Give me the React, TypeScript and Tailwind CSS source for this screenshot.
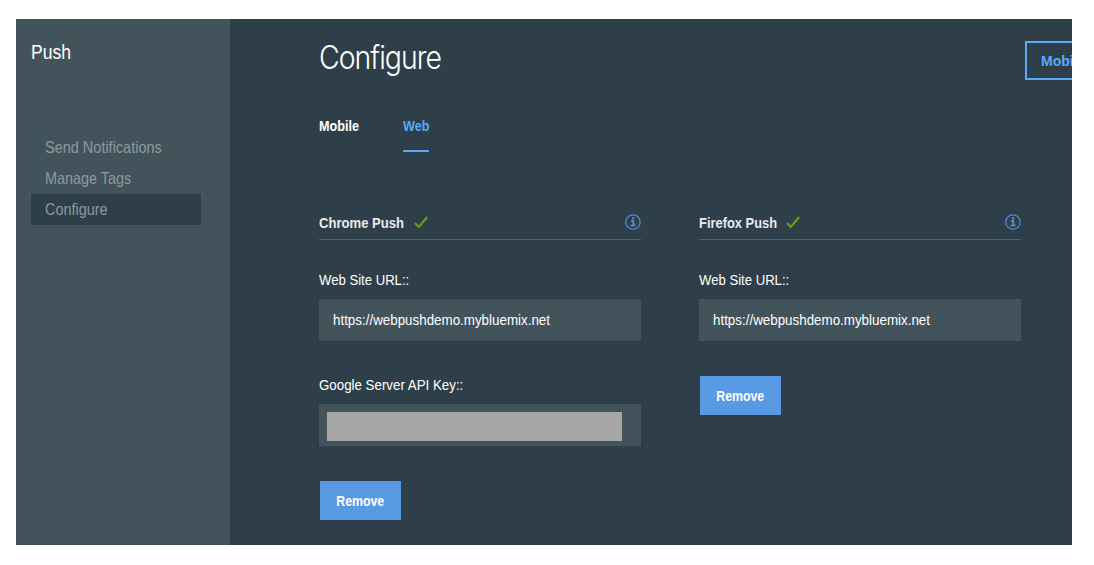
import type { ReactNode } from "react";

function Check() {
  return (
    <svg className="-ml-px -mt-px h-[13px] w-[14px]" viewBox="0 0 14 13" fill="none" stroke="#5aa700" strokeWidth="2.1">
      <path d="M0.9 7 L4.8 11 L13.2 1" />
    </svg>
  );
}

function Info() {
  return (
    <svg className="h-4 w-4" viewBox="0 0 16 16" fill="none" stroke="#4f8fdd">
      <circle cx="8" cy="8" r="7.2" strokeWidth="1.2" />
      <path d="M6 6.8H8.3V11.4M5.4 11.5H10.8" strokeWidth="1.7" />
      <path d="M7 4.3H9.2" strokeWidth="2" />
    </svg>
  );
}

function PushHeader({ children }: { children: ReactNode }) {
  return (
    <div className="flex h-[35px] items-start justify-between border-b border-[#51626c] pt-[9px]">
      <div className="flex items-center">{children}</div>
      <Info />
    </div>
  );
}

function Label({ children }: { children: ReactNode }) {
  return (
    <div className="h-5 text-[14.5px] leading-5 text-white">
      {children}
    </div>
  );
}

function UrlField() {
  return (
    <div className="mt-[9px] h-[42px] bg-[#43535b] pl-[14.5px] text-[14.5px] leading-[42px] text-white">
      <span className="inline-block origin-left scale-x-[0.922]">https://webpushdemo.mybluemix.net</span>
    </div>
  );
}

function Remove() {
  return (
    <button className="ml-[1.5px] flex h-[39px] w-[81px] items-center justify-center bg-[#5899e4] pt-px text-[14px] font-bold text-white">
      <span className="inline-block scale-x-[0.88]">Remove</span>
    </button>
  );
}

export default function App() {
  return (
    <div className="h-[565px] w-[1094px] overflow-hidden bg-white pl-4 pt-[19px] font-['Liberation_Sans',Arial,sans-serif]">
      <div className="flex h-[526px] w-[1056px] overflow-hidden bg-[#2f3f49]">
        <aside className="w-[214px] shrink-0 bg-[#43535b] pl-[15px] pt-[21px]">
          <div className="h-6 text-[19.5px] leading-6 text-white">
            <span className="inline-block origin-left scale-x-[0.9]">Push</span>
          </div>
          <nav className="mt-[68px] w-[170px] text-[16.5px] leading-[31px] text-[#8d999f]">
            <div className="h-[31px] pl-[14px]">
              <span className="inline-block origin-left scale-x-[0.878]">Send Notifications</span>
            </div>
            <div className="h-[31px] pl-[14px]">
              <span className="inline-block origin-left scale-x-[0.873]">Manage Tags</span>
            </div>
            <div className="h-[31px] bg-[#2f3f49] pl-[14px]">
              <span className="inline-block origin-left scale-x-[0.873]">Configure</span>
            </div>
          </nav>
        </aside>
        <main className="min-w-0 flex-1 pl-[88.6px]">
          <div className="flex h-[79px] items-start justify-between">
            <h1 className="mt-[19px] text-[32px] font-light leading-10 tracking-[-1.1px] text-white font-['Inter',sans-serif]">
              <span className="inline-block origin-left scale-x-[0.888]">Configure</span>
            </h1>
            <button className="-mr-[60px] mt-[22px] h-[39px] w-[107px] shrink-0 border-2 border-[#5aaafa] pl-[14px] pt-px text-left text-[14px] font-bold text-[#5aaafa]">
              <span className="inline-block origin-left whitespace-nowrap">Mobile</span>
            </button>
          </div>
          <div className="mt-[18px] flex h-[36px] text-[14.5px] font-bold leading-5">
            <div className="w-[84px] text-white">
              <span className="inline-block origin-left scale-x-[0.87]">Mobile</span>
            </div>
            <div className="w-[26px] border-b-2 border-[#5aaafa] text-[#5aaafa]">
              <span className="inline-block origin-left scale-x-[0.87]">Web</span>
            </div>
          </div>
          <div className="mt-[53px] flex gap-[58px] text-white">
            <section className="w-[322px] shrink-0">
              <PushHeader>
                <span className="w-[96px] whitespace-nowrap text-[14.5px] font-bold leading-[18px] text-[#e7ebed]">
                  <span className="inline-block origin-left scale-x-[0.902]">Chrome Push</span>
                </span>
                <Check />
              </PushHeader>
              <div className="pt-[30px]">
                <Label>
                  <span className="inline-block origin-left scale-x-[0.905]">Web Site URL::</span>
                </Label>
                <UrlField />
              </div>
              <div className="pt-[34px]">
                <Label>
                  <span className="inline-block origin-left scale-x-[0.918]">Google Server API Key::</span>
                </Label>
                <div className="mt-[9px] h-[42px] bg-[#43535b] pl-2 pt-2">
                  <div className="h-[29px] w-[295px] bg-[#a6a6a6]" />
                </div>
              </div>
              <div className="pt-[35px]">
                <Remove />
              </div>
            </section>
            <section className="w-[322px] shrink-0">
              <PushHeader>
                <span className="w-[88.5px] whitespace-nowrap text-[14.5px] font-bold leading-[18px] text-[#e7ebed]">
                  <span className="inline-block origin-left scale-x-[0.89]">Firefox Push</span>
                </span>
                <Check />
              </PushHeader>
              <div className="pt-[30px]">
                <Label>
                  <span className="inline-block origin-left scale-x-[0.905]">Web Site URL::</span>
                </Label>
                <UrlField />
              </div>
              <div className="pt-[35px]">
                <Remove />
              </div>
            </section>
          </div>
        </main>
      </div>
    </div>
  );
}
